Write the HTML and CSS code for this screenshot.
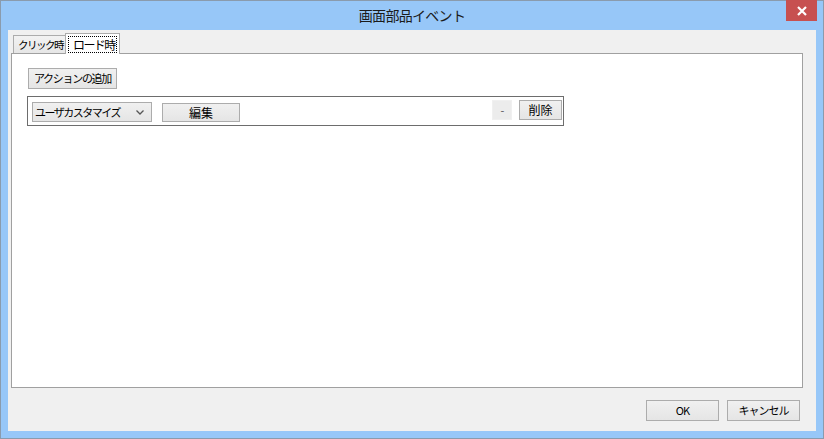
FILE: index.html
```html
<!DOCTYPE html>
<html>
<head>
	<title>画面部品イベント</title>
	<link rel="stylesheet" href="styles.css">
</head>
<body>
	<div class='window'>
		<div class='titlebar'>
			<span class='titletext'>画面部品イベント</span>
			<div class='closebtn'>
				<svg width='12' height='10' viewBox='0 0 12 10'>
					<path d='M2 1 L10 9 M10 1 L2 9' stroke='white' stroke-width='2.2' fill='none'/>
				</svg>
			</div>
		</div>
		<div class='client'>
			<div class='tabstrip'>
				<div class='tab'>クリック時</div>
				<div class='tab selected'><span class='focus'>ロード時</span></div>
			</div>
			<div class='panel'>
				<div class='buton addbtn'>アクションの追加</div>
				<div class='actionrow'>
					<div class='combo'>
						<span>ユーザカスタマイズ</span>
						<svg width='8' height='5' viewBox='0 0 8 5'>
							<path d='M0.5 0.5 L4 4 L7.5 0.5' stroke='#555' stroke-width='1.3' fill='none'/>
						</svg>
					</div>
					<div class='buton editbtn'>編集</div>
					<div class='spacer'></div>
					<div class='buton minusbtn'>-</div>
					<div class='buton deletebtn'>削除</div>
				</div>
			</div>
			<div class='footer'>
				<div class='buton dlgbtn'>OK</div>
				<div class='buton dlgbtn'>キャンセル</div>
			</div>
		</div>
	</div>
</body>
</html>
```

FILE: styles.css
```css
body {
	margin: 0;
	font-family: "Noto Sans CJK JP", "Noto Sans", sans-serif;
	font-size: 11px;
	color: #000;
	white-space: nowrap;
}
.window {
	width: 824px;
	height: 439px;
	box-sizing: border-box;
	background-color: #97c7f8;
	border: 1px solid #8a9bad;
	display: flex;
	flex-direction: column;
}
.titlebar {
	height: 29px;
	position: relative;
	display: flex;
	justify-content: center;
	align-items: center;
}
.titletext {
	font-size: 14px;
	letter-spacing: -0.7px;
	color: #1b1b1b;
	margin-top: -1px;
}
.closebtn {
	position: absolute;
	right: 6px;
	top: -1px;
	width: 31px;
	height: 21px;
	background-color: #c75050;
	display: flex;
	justify-content: center;
	align-items: center;
}
.client {
	margin-left: 7px;
	width: 808px;
	height: 401px;
	background-color: #f0f0f0;
	box-sizing: border-box;
	padding: 3px 13px 0 3px;
	display: flex;
	flex-direction: column;
}
.tabstrip {
	height: 20px;
	display: flex;
	align-items: flex-end;
	padding-left: 2px;
}
.tab {
	height: 18px;
	box-sizing: border-box;
	border: 1px solid #acacac;
	border-bottom: none;
	background: linear-gradient(#f2f2f2, #e6e6e6);
	padding: 0 0 0 4px;
	line-height: 17px;
	font-size: 10.5px;
	letter-spacing: -1.5px;
	width: 53px;
}
.tab.selected {
	height: 21px;
	width: 55px;
	margin-left: -1px;
	margin-bottom: -1px;
	background: #fff;
	position: relative;
	z-index: 1;
	padding: 2px 2px 0 2px;
	line-height: 15px;
}
.focus {
	display: block;
	border: 1px dotted #000;
	padding: 0 0 0 4px;
	font-size: 12px;
	letter-spacing: -1.6px;
}
.panel {
	height: 335px;
	box-sizing: border-box;
	border: 1px solid #a0a0a0;
	background-color: #fff;
	padding: 14px 0 0 16px;
}
.buton {
	box-sizing: border-box;
	border: 1px solid #acacac;
	background: linear-gradient(#f0f0f0, #e5e5e5);
	text-align: center;
	letter-spacing: -1px;
}
.addbtn {
	width: 89px;
	height: 21px;
	line-height: 19px;
	font-size: 11px;
	letter-spacing: -1.3px;
}
.actionrow {
	margin-top: 7px;
	margin-left: -1px;
	width: 537px;
	height: 30px;
	box-sizing: border-box;
	border: 1px solid #6d6d6d;
	padding: 0 1px 0 4px;
	display: flex;
	align-items: flex-start;
}
.combo {
	margin-top: 5px;
	width: 120px;
	height: 20px;
	box-sizing: border-box;
	border: 1px solid #acacac;
	background: linear-gradient(#f0f0f0, #e5e5e5);
	display: flex;
	align-items: center;
	justify-content: space-between;
	padding: 0 7px 0 2px;
	font-size: 11px;
	letter-spacing: -1.5px;
}
.editbtn {
	margin-top: 6px;
	margin-left: 10px;
	width: 78px;
	height: 19px;
	line-height: 17px;
	font-size: 12px;
	letter-spacing: 0;
}
.spacer {
	flex: 1;
}
.minusbtn {
	margin-top: 3px;
	width: 20px;
	height: 20px;
	line-height: 18px;
	border-color: #f0f0f0;
	background: #ececec;
	color: #555;
}
.deletebtn {
	margin-top: 3px;
	margin-left: 7px;
	width: 43px;
	height: 20px;
	line-height: 18px;
	font-size: 12px;
	letter-spacing: 0;
}
.footer {
	display: flex;
	justify-content: flex-end;
	gap: 8px;
	margin-top: 12px;
	padding-right: 3px;
}
.dlgbtn {
	width: 73px;
	height: 21px;
	line-height: 19px;
}
```
